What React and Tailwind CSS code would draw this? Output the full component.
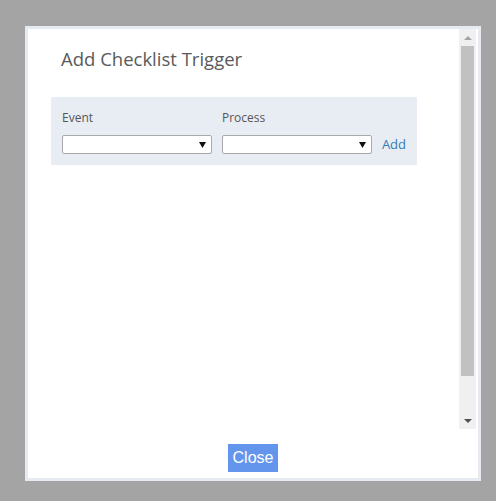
import React from 'react';

function FakeSelect() {
  return (
    <div className="w-[150px] h-[19px] bg-white border border-[#a9a9a9] rounded-[2px] flex items-center justify-end pr-[5px]">
      <svg width="7" height="6" viewBox="0 0 7 6">
        <polygon points="0,0 7,0 3.5,6" fill="#111" />
      </svg>
    </div>
  );
}

function Scrollbar() {
  return (
    <div className="w-[17px] h-full bg-[#f0f0f0] flex flex-col items-center">
      <div className="h-[17px] flex items-center justify-center">
        <svg width="8" height="4" viewBox="0 0 8 4">
          <polygon points="4,0 8,4 0,4" fill="#a3a3a3" />
        </svg>
      </div>
      <div className="w-[13px] h-[330px] bg-[#c1c1c1]" />
      <div className="flex-1" />
      <div className="h-[17px] flex items-center justify-center">
        <svg width="8" height="4" viewBox="0 0 8 4">
          <polygon points="0,0 8,0 4,4" fill="#505050" />
        </svg>
      </div>
    </div>
  );
}

export default function App() {
  return (
    <div className="w-[496px] h-[501px] bg-[#a4a4a4] pt-[26px] pl-[25px]" style={{ fontFamily: '"Open Sans", sans-serif' }}>
      <div className="w-[456px] h-[455px] border-[3px] border-[#e6ebf2] bg-white flex flex-col">
        <div className="h-[400px] flex pr-[2px]">
          <div className="flex-1 pl-[23px]">
            <h1 className="pl-[10px] pt-[17px] text-[18.5px] leading-[26px] text-[#5a5a5a]">Add Checklist Trigger</h1>
            <div className="mt-[25px] w-[366px] h-[68px] bg-[#e8edf4] px-[11px] pt-[13px]">
              <div className="flex text-[12px] leading-[16px] text-[#555]">
                <span className="w-[160px]">Event</span>
                <span>Process</span>
              </div>
              <div className="flex items-center mt-[9px]">
                <FakeSelect />
                <div className="w-[10px]" />
                <FakeSelect />
                <a className="ml-[10px] text-[13px] text-[#337ab7]">Add</a>
              </div>
            </div>
          </div>
          <Scrollbar />
        </div>
        <div className="flex-1 flex justify-center pt-[15px]">
          <button className="w-[50px] h-[28px] bg-[#6495ed] text-white text-[16px]" style={{ fontFamily: '"Liberation Sans", Arial, sans-serif' }}>
            Close
          </button>
        </div>
      </div>
    </div>
  );
}
